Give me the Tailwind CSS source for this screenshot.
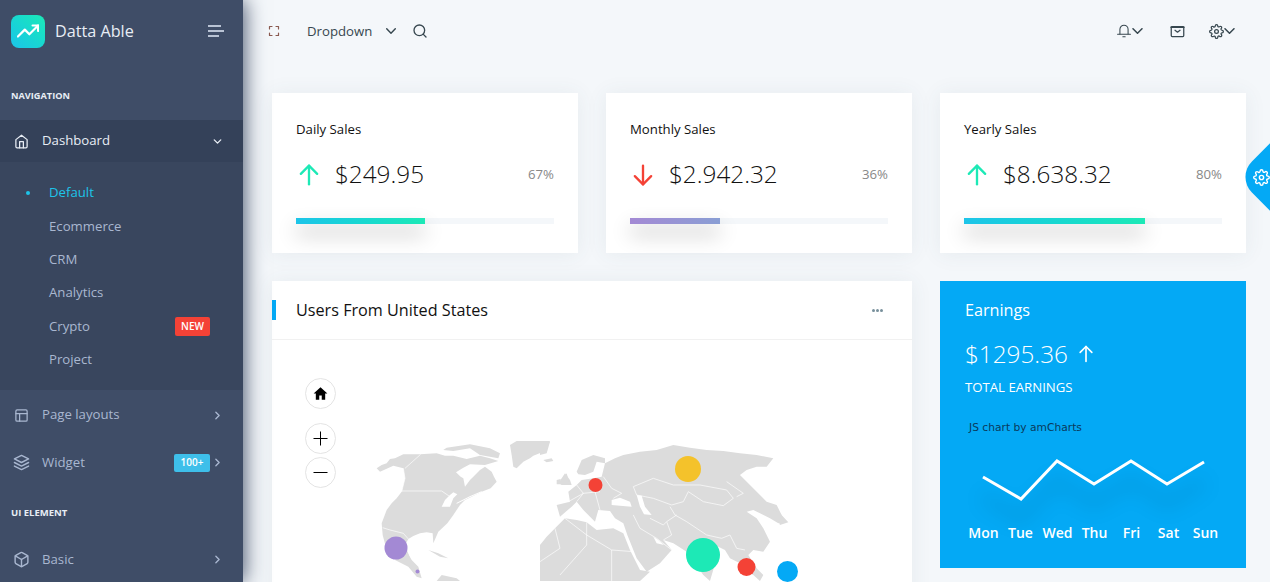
<!DOCTYPE html>
<html lang="en">
<head>
    <meta charset="UTF-8">
    <meta name="viewport" content="width=device-width, initial-scale=1.0">
    <title>Datta Able</title>
    <script src="https://cdn.jsdelivr.net/npm/@tailwindcss/browser@4"></script>
</head>
<body class="bg-[#f4f7fa]">
<div class="relative flex h-[582px] w-full overflow-hidden font-['Open_Sans',sans-serif] text-[13.2px] text-[#888]">

    <!-- Sidebar -->
    <aside class="z-10 flex h-full w-[243px] shrink-0 flex-col bg-[#3f4d67] text-[#a9b7d0] shadow-[1px_0_20px_0_#3f4d67]">
        <div class="flex h-[62px] shrink-0 items-center pl-[11px] pr-[19px]">
            <div class="flex h-[33px] w-[34px] items-center justify-center rounded-lg bg-gradient-to-tr from-[#1dc4e9] to-[#1de9b6]">
                <svg class="h-[22px] w-[22px]" viewBox="0 0 24 24" fill="none" stroke="#fff" stroke-width="2.4" stroke-linecap="round" stroke-linejoin="round"><polyline points="23 6 13.5 15.5 8.5 10.5 1 18"/><polyline points="17 6 23 6 23 12"/></svg>
            </div>
            <span class="ml-[10px] text-[16.2px] font-normal text-[#e8edf5]">Datta Able</span>
            <div class="ml-auto flex flex-col gap-[3px]">
                <span class="h-[2px] w-[13px] bg-[#b9c3d4]"></span>
                <span class="h-[2px] w-[16px] bg-[#b9c3d4]"></span>
                <span class="h-[2px] w-[11px] bg-[#b9c3d4]"></span>
            </div>
        </div>

        <div class="flex h-[58px] shrink-0 items-center pl-[11px] pt-[9px] text-[9.2px] font-bold uppercase text-[#e8edf5]">Navigation</div>

        <div class="flex h-[42px] shrink-0 items-center bg-[#344159] pl-[14px] pr-[19px] text-[#e8edf5]">
            <svg class="h-[15px] w-[15px]" viewBox="0 0 24 24" fill="none" stroke="currentColor" stroke-width="2" stroke-linecap="round" stroke-linejoin="round"><path d="M3 9l9-7 9 7v11a2 2 0 0 1-2 2H5a2 2 0 0 1-2-2z"/><polyline points="9 22 9 12 15 12 15 22"/></svg>
            <span class="ml-[13px]">Dashboard</span>
            <svg class="ml-auto h-[13px] w-[13px]" viewBox="0 0 24 24" fill="none" stroke="currentColor" stroke-width="2.5" stroke-linecap="round" stroke-linejoin="round"><polyline points="6 9 12 15 18 9"/></svg>
        </div>

        <div class="flex h-[228px] shrink-0 flex-col bg-[#39465e] pl-[49px] pr-[33px] pt-[14.5px]">
            <div class="relative flex h-[33.4px] items-center text-[#1dc4e9]">
                <span class="absolute left-[-23px] h-[4px] w-[4px] rounded-full bg-[#1dc4e9]"></span>Default
            </div>
            <div class="flex h-[33.4px] items-center">Ecommerce</div>
            <div class="flex h-[33.4px] items-center">CRM</div>
            <div class="flex h-[33.4px] items-center">Analytics</div>
            <div class="flex h-[33.4px] items-center justify-between">Crypto
                <span class="flex h-[19px] w-[35px] items-center justify-center rounded-[2px] bg-[#f44236] text-[10px] font-semibold text-white">NEW</span>
            </div>
            <div class="flex h-[33.4px] items-center">Project</div>
        </div>

        <div class="flex h-[49px] shrink-0 items-center pl-[14px] pr-[19px] pt-[1px]">
            <svg class="h-[15px] w-[15px]" viewBox="0 0 24 24" fill="none" stroke="currentColor" stroke-width="2" stroke-linecap="round" stroke-linejoin="round"><rect x="3" y="3" width="18" height="18" rx="2" ry="2"/><line x1="3" y1="9" x2="21" y2="9"/><line x1="9" y1="21" x2="9" y2="9"/></svg>
            <span class="ml-[13px]">Page layouts</span>
            <svg class="ml-auto h-[13px] w-[13px]" viewBox="0 0 24 24" fill="none" stroke="currentColor" stroke-width="2.5" stroke-linecap="round" stroke-linejoin="round"><polyline points="9 18 15 12 9 6"/></svg>
        </div>
        <div class="flex h-[46px] shrink-0 items-center pl-[13px] pr-[19px] pt-[1px]">
            <svg class="h-[17px] w-[17px]" viewBox="0 0 24 24" fill="none" stroke="currentColor" stroke-width="2" stroke-linecap="round" stroke-linejoin="round"><polygon points="12 2 2 7 12 12 22 7 12 2"/><polyline points="2 17 12 22 22 17"/><polyline points="2 12 12 17 22 12"/></svg>
            <span class="ml-[12px]">Widget</span>
            <span class="ml-auto flex h-[18px] w-[36px] items-center justify-center rounded-[2px] bg-[#3ebfea] text-[10px] font-semibold text-white">100+</span>
            <svg class="ml-[1px] h-[13px] w-[13px]" viewBox="0 0 24 24" fill="none" stroke="currentColor" stroke-width="2.5" stroke-linecap="round" stroke-linejoin="round"><polyline points="9 18 15 12 9 6"/></svg>
        </div>

        <div class="flex h-[56px] shrink-0 items-center pl-[11px] text-[9.5px] font-bold uppercase text-[#e8edf5]">UI Element</div>

        <div class="flex h-[36px] shrink-0 items-center pl-[13px] pr-[19px] pt-[1px]">
            <svg class="h-[17px] w-[17px]" viewBox="0 0 24 24" fill="none" stroke="currentColor" stroke-width="2" stroke-linecap="round" stroke-linejoin="round"><path d="M21 16V8a2 2 0 0 0-1-1.73l-7-4a2 2 0 0 0-2 0l-7 4A2 2 0 0 0 3 8v8a2 2 0 0 0 1 1.73l7 4a2 2 0 0 0 2 0l7-4A2 2 0 0 0 21 16z"/><polyline points="3.27 6.96 12 12.01 20.73 6.96"/><line x1="12" y1="22.08" x2="12" y2="12"/></svg>
            <span class="ml-[12px]">Basic</span>
            <svg class="ml-auto h-[13px] w-[13px]" viewBox="0 0 24 24" fill="none" stroke="currentColor" stroke-width="2.5" stroke-linecap="round" stroke-linejoin="round"><polyline points="9 18 15 12 9 6"/></svg>
        </div>
    </aside>

    <!-- Main -->
    <main class="min-w-0 flex-1">
        <!-- Top bar -->
        <header class="flex h-[62px] items-center pl-[25px] pr-[35px] text-[#37474f]">
            <svg class="h-[12px] w-[12px]" viewBox="0 0 24 24" fill="none" stroke="#8a5a50" stroke-width="2.4" stroke-linecap="round" stroke-linejoin="round"><path d="M8 3H3v5m18 0V3h-5m0 18h5v-5M3 16v5h5"/></svg>
            <span class="ml-[27px] pt-[1px]">Dropdown</span>
            <svg class="ml-[14px] h-[6px] w-[10px]" viewBox="5 8 14 8" fill="none" stroke="currentColor" stroke-width="2" stroke-linecap="round" stroke-linejoin="round"><polyline points="6 9 12 15 18 9"/></svg>
            <svg class="ml-[16px] h-[16px] w-[16px]" viewBox="0 0 24 24" fill="none" stroke="currentColor" stroke-width="2" stroke-linecap="round" stroke-linejoin="round"><circle cx="11" cy="11" r="8"/><line x1="21" y1="21" x2="16.65" y2="16.65"/></svg>

            <div class="ml-auto flex items-center">
                <svg class="h-[14px] w-[14px]" viewBox="0 0 24 24" fill="none" stroke="currentColor" stroke-width="1.8" stroke-linecap="round" stroke-linejoin="round"><path d="M5 17V9a7 7 0 0 1 14 0v8"/><line x1="1" y1="17.5" x2="23" y2="17.5"/><line x1="10" y1="22" x2="14" y2="22"/></svg>
                <svg class="ml-[1px] h-[6px] w-[11px]" viewBox="5 8 14 8" fill="none" stroke="currentColor" stroke-width="2" stroke-linecap="round" stroke-linejoin="round"><polyline points="6 9 12 15 18 9"/></svg>
                <svg class="ml-[27px] h-[15px] w-[15px]" viewBox="0 0 24 24" fill="none" stroke="currentColor" stroke-width="2" stroke-linecap="round" stroke-linejoin="round"><rect x="2" y="4" width="20" height="16" rx="1.5"/><line x1="2" y1="5" x2="22" y2="5" stroke-width="3"/><polyline points="8 10 12 13 16 10"/></svg>
                <svg class="ml-[24px] h-[15px] w-[15px]" viewBox="0 0 24 24" fill="none" stroke="currentColor" stroke-width="2" stroke-linecap="round" stroke-linejoin="round"><circle cx="12" cy="12" r="3"/><path d="M19.4 15a1.65 1.65 0 0 0 .33 1.82l.06.06a2 2 0 0 1 0 2.83 2 2 0 0 1-2.83 0l-.06-.06a1.65 1.65 0 0 0-1.82-.33 1.65 1.65 0 0 0-1 1.51V21a2 2 0 0 1-2 2 2 2 0 0 1-2-2v-.09A1.65 1.65 0 0 0 9 19.4a1.65 1.65 0 0 0-1.82.33l-.06.06a2 2 0 0 1-2.83 0 2 2 0 0 1 0-2.83l.06-.06a1.65 1.65 0 0 0 .33-1.82 1.65 1.65 0 0 0-1.51-1H3a2 2 0 0 1-2-2 2 2 0 0 1 2-2h.09A1.65 1.65 0 0 0 4.6 9a1.65 1.65 0 0 0-.33-1.82l-.06-.06a2 2 0 0 1 0-2.83 2 2 0 0 1 2.83 0l.06.06a1.65 1.65 0 0 0 1.82.33H9a1.65 1.65 0 0 0 1-1.51V3a2 2 0 0 1 2-2 2 2 0 0 1 2 2v.09a1.65 1.65 0 0 0 1 1.51 1.65 1.65 0 0 0 1.82-.33l.06-.06a2 2 0 0 1 2.83 0 2 2 0 0 1 0 2.83l-.06.06a1.65 1.65 0 0 0-.33 1.82V9a1.65 1.65 0 0 0 1.51 1H21a2 2 0 0 1 2 2 2 2 0 0 1-2 2h-.09a1.65 1.65 0 0 0-1.51 1z"/></svg>
                <svg class="h-[6px] w-[11px]" viewBox="5 8 14 8" fill="none" stroke="currentColor" stroke-width="2" stroke-linecap="round" stroke-linejoin="round"><polyline points="6 9 12 15 18 9"/></svg>
            </div>
        </header>

        <div class="grid grid-cols-[306px_306px_306px] gap-x-[28px] gap-y-[28px] pl-[29px] pt-[31px]">

            <!-- Daily -->
            <div class="h-[160px] bg-white px-[24px] pt-[27px] shadow-[0_1px_20px_0_rgba(69,90,100,0.08)]">
                <div class="text-[#111] leading-[19px]">Daily Sales</div>
                <div class="mt-[19px] flex h-[33px] items-center">
                    <svg class="h-[28px] w-[28px] -ml-[1px]" viewBox="0 0 24 24" fill="none" stroke="#1de9b6" stroke-width="2" stroke-linecap="round" stroke-linejoin="round"><line x1="12" y1="20" x2="12" y2="4"/><polyline points="5 11 12 4 19 11"/></svg>
                    <span class="ml-[12px] text-[24.3px] font-light text-[#111]">$249.95</span>
                    <span class="ml-auto text-[#888]">67%</span>
                </div>
                <div class="mt-[27px] h-[6px] bg-[#f4f7fa]">
                    <div class="h-full bg-gradient-to-r from-[#1dc4e9] to-[#1de9b6] shadow-[0_10px_20px_0_rgba(0,0,0,0.3)]" style="width:50%"></div>
                </div>
            </div>

            <!-- Monthly -->
            <div class="h-[160px] bg-white px-[24px] pt-[27px] shadow-[0_1px_20px_0_rgba(69,90,100,0.08)]">
                <div class="text-[#111] leading-[19px]">Monthly Sales</div>
                <div class="mt-[19px] flex h-[33px] items-center">
                    <svg class="h-[28px] w-[28px] -ml-[1px]" viewBox="0 0 24 24" fill="none" stroke="#f44236" stroke-width="2" stroke-linecap="round" stroke-linejoin="round"><line x1="12" y1="4" x2="12" y2="20"/><polyline points="19 13 12 20 5 13"/></svg>
                    <span class="ml-[12px] text-[24.3px] font-light text-[#111]">$2.942.32</span>
                    <span class="ml-auto text-[#888]">36%</span>
                </div>
                <div class="mt-[27px] h-[6px] bg-[#f4f7fa]">
                    <div class="h-full bg-gradient-to-r from-[#a389d4] to-[#899ed4] shadow-[0_10px_20px_0_rgba(0,0,0,0.3)]" style="width:35%"></div>
                </div>
            </div>

            <!-- Yearly -->
            <div class="h-[160px] bg-white px-[24px] pt-[27px] shadow-[0_1px_20px_0_rgba(69,90,100,0.08)]">
                <div class="text-[#111] leading-[19px]">Yearly Sales</div>
                <div class="mt-[19px] flex h-[33px] items-center">
                    <svg class="h-[28px] w-[28px] -ml-[1px]" viewBox="0 0 24 24" fill="none" stroke="#1de9b6" stroke-width="2" stroke-linecap="round" stroke-linejoin="round"><line x1="12" y1="20" x2="12" y2="4"/><polyline points="5 11 12 4 19 11"/></svg>
                    <span class="ml-[12px] text-[24.3px] font-light text-[#111]">$8.638.32</span>
                    <span class="ml-auto text-[#888]">80%</span>
                </div>
                <div class="mt-[27px] h-[6px] bg-[#f4f7fa]">
                    <div class="h-full bg-gradient-to-r from-[#1dc4e9] to-[#1de9b6] shadow-[0_10px_20px_0_rgba(0,0,0,0.3)]" style="width:70%"></div>
                </div>
            </div>

            <!-- Map card -->
            <div class="relative col-span-2 h-[320px] bg-white shadow-[0_1px_20px_0_rgba(69,90,100,0.08)]">
                <div class="relative flex h-[59px] items-center border-b border-[#f1f1f1] pl-[24px] pr-[29px]">
                    <span class="absolute left-0 top-[19px] h-[20px] w-[4px] bg-[#04a9f5]"></span>
                    <span class="text-[16.2px] text-[#111]">Users From United States</span>
                    <span class="ml-auto flex gap-[1px]">
                        <span class="h-[3px] w-[3px] rounded-full bg-[#78909c]"></span>
                        <span class="h-[3px] w-[3px] rounded-full bg-[#78909c]"></span>
                        <span class="h-[3px] w-[3px] rounded-full bg-[#78909c]"></span>
                    </span>
                </div>

                <!-- map controls -->
                <div class="absolute left-[33px] top-[97px] flex flex-col">
                    <div class="flex h-[31px] w-[31px] items-center justify-center rounded-full border border-[#e4e4e4] bg-white">
                        <svg class="h-[15px] w-[15px]" viewBox="0 0 24 24" fill="#000"><path d="M12 2 1 12h3.5v10h5.5v-7h4v7h5.5V12H23z"/></svg>
                    </div>
                    <div class="mt-[14px] flex h-[31px] w-[31px] items-center justify-center rounded-full border border-[#e4e4e4] bg-white">
                        <svg class="h-[15px] w-[15px]" viewBox="0 0 15 15" stroke="#000" stroke-width="1"><line x1="7.5" y1="0.5" x2="7.5" y2="14.5"/><line x1="0.5" y1="7.5" x2="14.5" y2="7.5"/></svg>
                    </div>
                    <div class="mt-[3px] flex h-[31px] w-[31px] items-center justify-center rounded-full border border-[#e4e4e4] bg-white">
                        <svg class="h-[15px] w-[15px]" viewBox="0 0 15 15" stroke="#000" stroke-width="1"><line x1="0.5" y1="7.5" x2="14.5" y2="7.5"/></svg>
                    </div>
                </div>

                <!-- world map -->
                <svg class="absolute left-[98px] top-[154px]" width="450" height="147" viewBox="370 435 450 147">
                    <!-- americas + greenland -->
                    <g transform="translate(370 435) scale(0.3333)" fill="#dcdcdc" stroke="#fff" stroke-width="2" stroke-linejoin="round">
                        <path stroke="none" d="M20 100 35 90 50 85 60 72 75 70 100 58 150 58 200 55 225 62 250 62 290 72 330 62 360 70 385 78 345 90 300 88 280 98 258 112 272 125 280 130 285 155 300 135 310 125 330 105 345 95 365 110 372 125 380 140 362 160 335 170 305 185 285 195 270 210 250 240 232 265 205 290 190 325 188 295 170 292 150 295 130 303 115 312 105 330 120 370 80 375 50 345 38 300 35 265 50 225 65 205 80 190 95 170 105 130 100 100 70 92 30 110z"/>
                        <path stroke="none" d="M105 340 125 375 145 395 155 430 140 425 115 395 75 375z"/>
                        <path stroke="none" d="M420 30 440 18 540 18 532 38 520 50 490 62 480 70 460 80 440 100 430 95 425 60z"/>
                        <path stroke="none" d="M220 45 250 48 300 40 330 60 385 70 390 55 360 40 300 28 230 38z"/>
                        <path stroke="none" d="M520 75 545 70 550 78 530 82z"/>
                        <path stroke="none" d="M565 145 578 125 585 115 600 135 605 150 575 150z"/>
                        <path stroke="none" d="M200 438 215 420 260 430 270 438z"/>
                        <path stroke="none" d="M175 345 205 355 235 370 210 365z"/>
                        <path fill="none" d="M152 58 105 100M95 168H215L240 185M38 278 60 285 100 295 115 312M100 100 105 130 95 170"/>
                        <path fill="#fff" stroke="none" d="M215 215 225 195 240 180 250 172 262 178 250 190 240 215z"/>
                        <path fill="none" stroke-width="3" d="M260 205 300 185 335 170"/>
                    </g>
                    <!-- europe, asia, africa -->
                    <g transform="translate(540 435) scale(0.3333)" fill="#dcdcdc" stroke="#fff" stroke-width="2" stroke-linejoin="round">
                        <path stroke="none" d="M110 150 125 135 160 130 185 125 195 85 225 70 250 60 300 50 350 45 400 30 450 38 500 45 550 48 600 55 650 60 700 70 680 95 650 95 620 105 600 120 630 150 660 180 680 200 710 210 735 260 715 265 690 250 660 235 640 225 620 230 650 250 670 280 690 320 670 350 640 345 625 360 650 400 670 420 660 438 640 420 620 410 600 385 570 370 555 345 535 335 510 315 530 370 510 438 490 420 440 350 400 325 370 315 395 345 360 385 320 410 290 370 262 300 250 265 225 250 210 228 175 225 165 260 130 225 110 200 95 215 60 245 50 210 90 200 85 170z"/>
                        <path stroke="none" d="M110 110 125 75 160 60 195 70 195 85 170 80 160 110 135 120 115 118z"/>
                        <path stroke="none" d="M0 330 20 305 45 280 75 250 110 255 140 262 170 285 220 280 250 295 270 345 300 405 330 410 300 438 0 438z"/>
                        <path stroke="none" d="M0 20 30 20 20 55 0 60z"/>
                        <path stroke="none" d="M70 130 80 115 90 150 70 150z"/>
                        <path stroke="none" d="M50 135 62 132 60 148 50 148z"/>
                        <path stroke="none" d="M700 225 720 235 745 262 720 270 710 245z"/>
                        <!-- seas -->
                        <path fill="#fff" stroke="none" d="M215 195 240 188 270 200 275 215 240 212 215 210z"/>
                        <path fill="#fff" stroke="none" d="M290 180 305 182 315 215 335 240 312 238 300 215z"/>
                        <path fill="#fff" stroke="none" d="M340 305 355 315 372 330 350 325z"/>
                        <!-- borders -->
                        <path fill="none" d="M280 155 340 130 400 150 480 150 560 165 580 190M580 190 550 212 490 200 445 170 430 200 395 210 340 190 290 180 280 155M560 140 610 175 590 185M390 215 405 240 440 260 500 300 545 310 570 300 590 340 615 345M410 240 380 260 395 300 370 315M330 250 370 270 380 260M280 240 300 280 350 310 395 345M190 125 215 160 245 175 220 190M130 175 180 170M160 130 165 170 180 225M110 150 130 175 110 200M85 200 130 175M45 280 60 340 0 380M75 250 140 300 215 345 215 438M140 262 140 330 60 420M215 345 280 350"/>
                    </g>
                    <circle cx="396" cy="548" r="11.5" fill="#a389d4"/>
                    <circle cx="417.5" cy="571.5" r="2" fill="#a389d4"/>
                    <circle cx="595.5" cy="485" r="7" fill="#f44236"/>
                    <circle cx="688" cy="469" r="13" fill="#f4c22b"/>
                    <circle cx="703" cy="555" r="17" fill="#1de9b6"/>
                    <circle cx="746.5" cy="567" r="9" fill="#f44236"/>
                    <circle cx="787.5" cy="571.5" r="10.5" fill="#04a9f5"/>
                </svg>
            </div>

            <!-- Earnings -->
            <div class="relative h-[287px] bg-[#04a9f5] px-[25px] pt-[18px] text-white">
                <div class="text-[16.2px] leading-[22px]">Earnings</div>
                <div class="mt-[17px] flex items-center">
                    <span class="text-[24.3px] font-light leading-[32px]">$1295.36</span>
                    <svg class="ml-[8px] h-[20px] w-[20px]" viewBox="0 0 24 24" fill="none" stroke="currentColor" stroke-width="2" stroke-linecap="round" stroke-linejoin="round"><line x1="12" y1="21" x2="12" y2="3"/><polyline points="5 10 12 3 19 10"/></svg>
                </div>
                <div class="mt-[8px] leading-[19px]">TOTAL EARNINGS</div>
                <div class="absolute left-[29px] top-[139px] font-['DejaVu_Sans',sans-serif] text-[10.7px] leading-[16px] text-[#0a3a5c]">JS chart by amCharts</div>

                <svg class="absolute left-0 top-0" width="306" height="287" viewBox="940 281 306 287">
                    <polyline class="blur-[10px]" points="983,497 1021,519 1057,481 1094,504 1131,481 1167,504 1204,482" fill="none" stroke="#000" stroke-opacity="0.1" stroke-width="8"/>
                    <polyline points="983,477 1021,499 1057,461 1094,484 1131,461 1167,484 1204,462" fill="none" stroke="#fff" stroke-width="3"/>
                </svg>

                <div class="absolute left-[25px] top-[243px] grid w-[259px] grid-cols-7 text-center text-[14px] font-semibold leading-[18px]">
                    <span>Mon</span>
                    <span>Tue</span>
                    <span>Wed</span>
                    <span>Thu</span>
                    <span>Fri</span>
                    <span>Sat</span>
                    <span>Sun</span>
                </div>
            </div>
        </div>
    </main>

    <!-- Settings tab, hangs over the right edge -->
    <div class="absolute left-[1255px] top-[132px] h-[90px] w-[90px] rotate-45 rounded-[22px] bg-[#04a9f5]"></div>
    <svg class="absolute left-[1253px] top-[169px] h-[17px] w-[17px]" viewBox="0 0 24 24" fill="none" stroke="#fff" stroke-width="2" stroke-linecap="round" stroke-linejoin="round"><circle cx="12" cy="12" r="3"/><path d="M19.4 15a1.65 1.65 0 0 0 .33 1.82l.06.06a2 2 0 0 1 0 2.83 2 2 0 0 1-2.83 0l-.06-.06a1.65 1.65 0 0 0-1.82-.33 1.65 1.65 0 0 0-1 1.51V21a2 2 0 0 1-2 2 2 2 0 0 1-2-2v-.09A1.65 1.65 0 0 0 9 19.4a1.65 1.65 0 0 0-1.82.33l-.06.06a2 2 0 0 1-2.83 0 2 2 0 0 1 0-2.83l.06-.06a1.65 1.65 0 0 0 .33-1.82 1.65 1.65 0 0 0-1.51-1H3a2 2 0 0 1-2-2 2 2 0 0 1 2-2h.09A1.65 1.65 0 0 0 4.6 9a1.65 1.65 0 0 0-.33-1.82l-.06-.06a2 2 0 0 1 0-2.83 2 2 0 0 1 2.83 0l.06.06a1.65 1.65 0 0 0 1.82.33H9a1.65 1.65 0 0 0 1-1.51V3a2 2 0 0 1 2-2 2 2 0 0 1 2 2v.09a1.65 1.65 0 0 0 1 1.51 1.65 1.65 0 0 0 1.82-.33l.06-.06a2 2 0 0 1 2.83 0 2 2 0 0 1 0 2.83l-.06.06a1.65 1.65 0 0 0-.33 1.82V9a1.65 1.65 0 0 0 1.51 1H21a2 2 0 0 1 2 2 2 2 0 0 1-2 2h-.09a1.65 1.65 0 0 0-1.51 1z"/></svg>
</div>
</body>
</html>
